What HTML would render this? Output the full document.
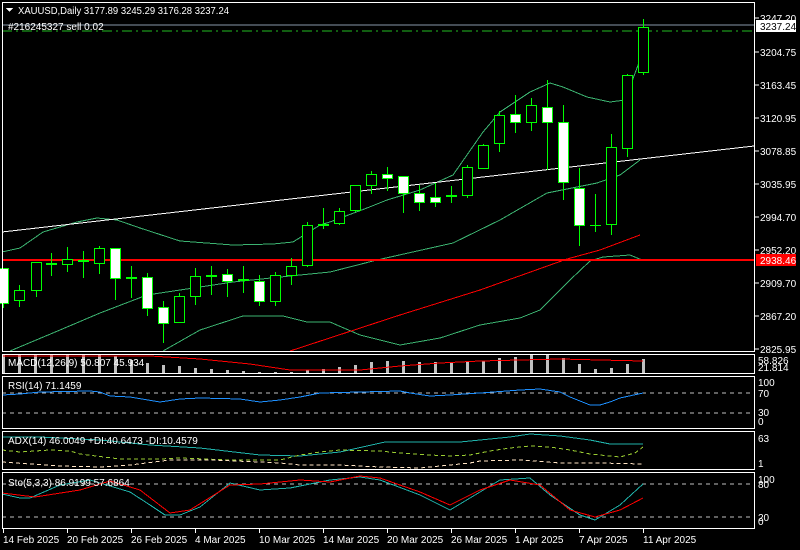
<!DOCTYPE html>
<html><head><meta charset="utf-8"><style>
html,body{margin:0;padding:0;background:#000;width:800px;height:550px;overflow:hidden}
svg{display:block}
text{font-family:"Liberation Sans",sans-serif;font-size:10px;fill:#fff}
</style></head><body>
<svg width="800" height="550" viewBox="0 0 800 550" xmlns="http://www.w3.org/2000/svg" shape-rendering="crispEdges">
<rect width="800" height="550" fill="#000"/>
<g fill="none" stroke-width="1">
<polyline stroke="#3cb371" points="2,252 20,248 43,232 77,222 97,218 117,220 140,228 180,241 233,245 273,244 293,242 320,225 330,222 367,208 387,200 420,190 453,175 483,132 500,112 530,92 550,83 563,87 587,97 610,102 625,100 640,60"/>
<polyline stroke="#3cb371" points="10,351 60,330 100,313 147,295 200,287 233,282 290,276 330,272 377,260 453,243 500,220 547,193 597,183 620,175 640,160"/>
<polyline stroke="#3cb371" points="163,351 200,330 243,316 283,316 307,322 330,322 360,335 400,345 440,338 480,325 520,318 540,310 570,280 590,261 603,257 630,255 642,260"/>
<polyline stroke="#ff0000" points="290,351 400,315 480,290 567,259 600,250 640,235"/>
<line x1="2" y1="232" x2="754" y2="146" stroke="#fff"/>
<line x1="2" y1="260" x2="754" y2="260" stroke="#ff0000" stroke-width="2"/>
<line x1="2" y1="25" x2="754" y2="25" stroke="#8899aa"/>
<line x1="2" y1="31" x2="754" y2="31" stroke="#22bb22" stroke-dasharray="10,4,2,4"/>
</g>
<g stroke="#00ff00" stroke-width="1">
<line x1="3.5" y1="268" x2="3.5" y2="308"/><rect x="-1.5" y="268.5" width="10" height="35" fill="#fff"/>
<line x1="19.5" y1="285" x2="19.5" y2="307"/><rect x="14.5" y="290.5" width="10" height="10" fill="#000"/>
<line x1="36.5" y1="262" x2="36.5" y2="297"/><rect x="31.5" y="262.5" width="10" height="28" fill="#000"/>
<line x1="51.5" y1="253" x2="51.5" y2="276"/><rect x="46" y="263" width="11" height="2" fill="#00ff00" stroke="none"/>
<line x1="67.5" y1="247" x2="67.5" y2="272"/><rect x="62.5" y="259.5" width="10" height="5" fill="#000"/>
<line x1="83.5" y1="251" x2="83.5" y2="278"/><rect x="78" y="260" width="11" height="2" fill="#00ff00" stroke="none"/>
<line x1="99.5" y1="246" x2="99.5" y2="274"/><rect x="94.5" y="248.5" width="10" height="15" fill="#000"/>
<line x1="115.5" y1="248" x2="115.5" y2="300"/><rect x="110.5" y="248.5" width="10" height="30" fill="#fff"/>
<line x1="131.5" y1="266" x2="131.5" y2="298"/><rect x="126" y="277" width="11" height="2" fill="#00ff00" stroke="none"/>
<line x1="147.5" y1="273" x2="147.5" y2="316"/><rect x="142.5" y="277.5" width="10" height="31" fill="#fff"/>
<line x1="163.5" y1="301" x2="163.5" y2="343"/><rect x="158.5" y="307.5" width="10" height="16" fill="#fff"/>
<line x1="179.5" y1="293" x2="179.5" y2="323"/><rect x="174.5" y="296.5" width="10" height="26" fill="#000"/>
<line x1="195.5" y1="268" x2="195.5" y2="305"/><rect x="190.5" y="276.5" width="10" height="20" fill="#000"/>
<line x1="211.5" y1="266" x2="211.5" y2="295"/><rect x="206" y="275" width="11" height="2" fill="#00ff00" stroke="none"/>
<line x1="227.5" y1="269" x2="227.5" y2="297"/><rect x="222.5" y="274.5" width="10" height="7" fill="#fff"/>
<line x1="243.5" y1="266" x2="243.5" y2="293"/><rect x="238" y="279" width="11" height="2" fill="#00ff00" stroke="none"/>
<line x1="259.5" y1="275" x2="259.5" y2="306"/><rect x="254.5" y="281.5" width="10" height="20" fill="#fff"/>
<line x1="275.5" y1="272" x2="275.5" y2="306"/><rect x="270.5" y="275.5" width="10" height="26" fill="#000"/>
<line x1="291.5" y1="258" x2="291.5" y2="285"/><rect x="286.5" y="266.5" width="10" height="9" fill="#000"/>
<line x1="307.5" y1="222" x2="307.5" y2="267"/><rect x="302.5" y="225.5" width="10" height="40" fill="#000"/>
<line x1="323.5" y1="208" x2="323.5" y2="229"/><rect x="318" y="224" width="11" height="2" fill="#00ff00" stroke="none"/>
<line x1="339.5" y1="208" x2="339.5" y2="225"/><rect x="334.5" y="211.5" width="10" height="12" fill="#000"/>
<line x1="355.5" y1="185" x2="355.5" y2="212"/><rect x="350.5" y="185.5" width="10" height="25" fill="#000"/>
<line x1="371.5" y1="171" x2="371.5" y2="194"/><rect x="366.5" y="174.5" width="10" height="11" fill="#000"/>
<line x1="387.5" y1="167" x2="387.5" y2="191"/><rect x="382.5" y="174.5" width="10" height="4" fill="#fff"/>
<line x1="403.5" y1="176" x2="403.5" y2="213"/><rect x="398.5" y="176.5" width="10" height="17" fill="#fff"/>
<line x1="419.5" y1="185" x2="419.5" y2="211"/><rect x="414.5" y="193.5" width="10" height="9" fill="#fff"/>
<line x1="435.5" y1="183" x2="435.5" y2="207"/><rect x="430.5" y="197.5" width="10" height="5" fill="#fff"/>
<line x1="451.5" y1="186" x2="451.5" y2="203"/><rect x="446" y="195" width="11" height="2" fill="#00ff00" stroke="none"/>
<line x1="467.5" y1="165" x2="467.5" y2="198"/><rect x="462.5" y="167.5" width="10" height="28" fill="#000"/>
<line x1="483.5" y1="144" x2="483.5" y2="169"/><rect x="478.5" y="145.5" width="10" height="23" fill="#000"/>
<line x1="499.5" y1="111" x2="499.5" y2="152"/><rect x="494.5" y="115.5" width="10" height="28" fill="#000"/>
<line x1="515.5" y1="95" x2="515.5" y2="133"/><rect x="510.5" y="114.5" width="10" height="8" fill="#fff"/>
<line x1="531.5" y1="98" x2="531.5" y2="131"/><rect x="526.5" y="105.5" width="10" height="17" fill="#000"/>
<line x1="547.5" y1="80" x2="547.5" y2="170"/><rect x="542.5" y="107.5" width="10" height="15" fill="#fff"/>
<line x1="563.5" y1="105" x2="563.5" y2="200"/><rect x="558.5" y="122.5" width="10" height="60" fill="#fff"/>
<line x1="579.5" y1="168" x2="579.5" y2="246"/><rect x="574.5" y="188.5" width="10" height="37" fill="#fff"/>
<line x1="595.5" y1="194" x2="595.5" y2="232"/><rect x="590" y="225" width="11" height="1" fill="#00ff00" stroke="none"/>
<line x1="611.5" y1="134" x2="611.5" y2="235"/><rect x="606.5" y="147.5" width="10" height="77" fill="#000"/>
<line x1="627.5" y1="74" x2="627.5" y2="157"/><rect x="622.5" y="75.5" width="10" height="73" fill="#000"/>
<line x1="643.5" y1="19" x2="643.5" y2="75"/><rect x="638.5" y="27.5" width="10" height="45" fill="#000"/>
</g>
<g fill="#c0c0c0">
<rect x="2" y="355" width="3" height="19"/><rect x="18" y="355" width="3" height="19"/><rect x="34" y="355" width="3" height="19"/><rect x="50" y="355" width="3" height="19"/><rect x="66" y="355" width="3" height="19"/><rect x="82" y="355" width="3" height="19"/><rect x="98" y="355" width="3" height="19"/><rect x="114" y="356" width="3" height="18"/><rect x="130" y="360" width="3" height="14"/><rect x="146" y="363" width="3" height="11"/><rect x="162" y="365" width="3" height="9"/><rect x="178" y="366" width="3" height="8"/><rect x="194" y="368" width="3" height="6"/><rect x="210" y="369" width="3" height="5"/><rect x="226" y="370" width="3" height="4"/><rect x="242" y="371" width="3" height="3"/><rect x="258" y="372" width="3" height="2"/><rect x="274" y="372" width="3" height="2"/><rect x="290" y="372" width="3" height="2"/><rect x="306" y="370" width="3" height="4"/><rect x="322" y="369" width="3" height="5"/><rect x="338" y="367" width="3" height="7"/><rect x="354" y="365" width="3" height="9"/><rect x="370" y="362" width="3" height="12"/><rect x="386" y="361" width="3" height="13"/><rect x="402" y="361" width="3" height="13"/><rect x="418" y="362" width="3" height="12"/><rect x="434" y="362" width="3" height="12"/><rect x="450" y="363" width="3" height="11"/><rect x="466" y="362" width="3" height="12"/><rect x="482" y="361" width="3" height="13"/><rect x="498" y="358" width="3" height="16"/><rect x="514" y="357" width="3" height="17"/><rect x="530" y="355" width="3" height="19"/><rect x="546" y="355" width="3" height="19"/><rect x="562" y="358" width="3" height="16"/><rect x="578" y="364" width="3" height="10"/><rect x="594" y="369" width="3" height="5"/><rect x="610" y="368" width="3" height="6"/><rect x="626" y="364" width="3" height="10"/><rect x="642" y="359" width="3" height="15"/>
</g>
<g fill="none" stroke-width="1">
<polyline stroke="#ff0000" points="2,356 150,356 200,359 250,364 290,370 360,370 400,366 440,363 480,361 520,360 560,359 600,360 643,361"/>
<line x1="2" y1="393" x2="754" y2="393" stroke="#c0c0c0" stroke-dasharray="4,4"/>
<line x1="2" y1="413" x2="754" y2="413" stroke="#c0c0c0" stroke-dasharray="4,4"/>
<polyline stroke="#1e90ff" points="2,395 20,394 40,392 90,391 100,392 110,396 130,397 160,402 180,399 200,398 240,399 260,402 280,400 300,397 320,393 360,392 400,391 410,393 430,396 450,395 480,393 520,390 540,389 560,392 570,397 580,401 590,405 600,405 610,402 620,398 643,393"/>
<polyline stroke="#20b2aa" points="2,437 40,437 100,440 150,445 200,448 260,455 300,456 340,452 385,442 460,442 480,440 510,437 530,434 560,436 590,440 610,444 643,444"/>
<polyline stroke="#9acd32" stroke-dasharray="4,3" points="2,450 20,452 50,450 70,451 80,454 120,459 160,459 180,458 230,460 280,460 300,455 320,452 340,450 380,451 400,453 430,455 450,456 470,455 490,451 510,448 530,446 550,447 570,450 590,454 620,457 635,453 643,447"/>
<polyline stroke="#ffe4c4" stroke-dasharray="4,3" points="2,462 30,464 60,466 100,467 130,465 170,460 210,460 260,462 280,463 300,465 340,465 380,467 420,468 440,466 470,463 480,461 520,460 560,463 600,463 643,464"/>
<line x1="2" y1="484" x2="754" y2="484" stroke="#c0c0c0" stroke-dasharray="4,4"/>
<line x1="2" y1="517" x2="754" y2="517" stroke="#c0c0c0" stroke-dasharray="4,4"/>
<polyline stroke="#20b2aa" points="2,494 20,498 30,498 60,485 90,480 130,492 150,505 165,515 180,515 200,507 230,483 260,490 290,488 330,480 360,477 380,480 420,495 450,510 475,495 500,480 530,478 550,495 580,515 595,520 620,505 643,484"/>
<polyline stroke="#ff0000" points="2,493 35,497 80,490 110,481 140,490 170,513 190,510 230,485 260,484 300,480 330,482 360,476 380,478 420,492 450,505 480,490 510,480 540,485 570,510 595,517 620,510 643,498"/>
</g>
<g fill="none" stroke="#fff" stroke-width="1">
<rect x="2.5" y="2.5" width="752" height="349"/>
<rect x="2.5" y="354.5" width="752" height="19"/>
<rect x="2.5" y="376.5" width="752" height="52"/>
<rect x="2.5" y="431.5" width="752" height="38"/>
<rect x="2.5" y="472.5" width="752" height="56"/>
</g>
<g stroke="#fff"><line x1="3.5" y1="529" x2="3.5" y2="533"/><line x1="67.5" y1="529" x2="67.5" y2="533"/><line x1="131.5" y1="529" x2="131.5" y2="533"/><line x1="195.5" y1="529" x2="195.5" y2="533"/><line x1="259.5" y1="529" x2="259.5" y2="533"/><line x1="323.5" y1="529" x2="323.5" y2="533"/><line x1="387.5" y1="529" x2="387.5" y2="533"/><line x1="451.5" y1="529" x2="451.5" y2="533"/><line x1="515.5" y1="529" x2="515.5" y2="533"/><line x1="579.5" y1="529" x2="579.5" y2="533"/><line x1="643.5" y1="529" x2="643.5" y2="533"/>
<line x1="755" y1="18" x2="759" y2="18"/><line x1="755" y1="52" x2="759" y2="52"/><line x1="755" y1="85" x2="759" y2="85"/><line x1="755" y1="118" x2="759" y2="118"/><line x1="755" y1="151" x2="759" y2="151"/><line x1="755" y1="184" x2="759" y2="184"/><line x1="755" y1="217" x2="759" y2="217"/><line x1="755" y1="250" x2="759" y2="250"/><line x1="755" y1="283" x2="759" y2="283"/><line x1="755" y1="316" x2="759" y2="316"/><line x1="755" y1="349" x2="759" y2="349"/></g>
<polygon points="6,8 13,8 9.5,12" fill="#fff"/>
<text x="18" y="14" textLength="211" lengthAdjust="spacingAndGlyphs">XAUUSD,Daily  3177.89 3245.29 3176.28 3237.24</text>
<text x="8" y="30">#216245327 sell 0.02</text>
<text x="8" y="366">MACD(12,26,9) 50.807 45.934</text>
<text x="8" y="389">RSI(14) 71.1459</text>
<text x="8" y="444">ADX(14) 46.0049 +DI:40.6473 -DI:10.4579</text>
<text x="8" y="486">Sto(5,3,3) 86.9199 57.6864</text>
<g>
<text x="760" y="22">3247.20</text>
<rect x="756" y="20" width="40" height="12" fill="#fff"/>
<text x="760" y="30" style="fill:#000">3237.24</text>
<text x="760" y="56">3204.75</text>
<text x="760" y="89">3163.45</text>
<text x="760" y="122">3120.95</text>
<text x="760" y="155">3078.85</text>
<text x="760" y="188">3035.95</text>
<text x="760" y="221">2994.70</text>
<text x="760" y="254">2952.20</text>
<rect x="756" y="254" width="40" height="12" fill="#ff0000"/>
<text x="760" y="264">2938.46</text>
<text x="760" y="287">2909.70</text>
<text x="760" y="320">2867.20</text>
<text x="760" y="353">2825.95</text>
<text x="758" y="364">58.826</text>
<text x="758" y="371">21.814</text>
<text x="758" y="386">100</text>
<text x="758" y="397">70</text>
<text x="758" y="416">30</text>
<text x="758" y="425">0</text>
<text x="758" y="442">63</text>
<text x="758" y="467">1</text>
<text x="758" y="483">100</text>
<text x="758" y="488">80</text>
<text x="758" y="521">20</text>
<text x="758" y="525">0</text>
</g>
<g>
<text x="3" y="543">14 Feb 2025</text><text x="67" y="543">20 Feb 2025</text><text x="131" y="543">26 Feb 2025</text><text x="195" y="543">4 Mar 2025</text><text x="259" y="543">10 Mar 2025</text><text x="323" y="543">14 Mar 2025</text><text x="387" y="543">20 Mar 2025</text><text x="451" y="543">26 Mar 2025</text><text x="515" y="543">1 Apr 2025</text><text x="579" y="543">7 Apr 2025</text><text x="643" y="543">11 Apr 2025</text>
</g>
</svg>
</body></html>
